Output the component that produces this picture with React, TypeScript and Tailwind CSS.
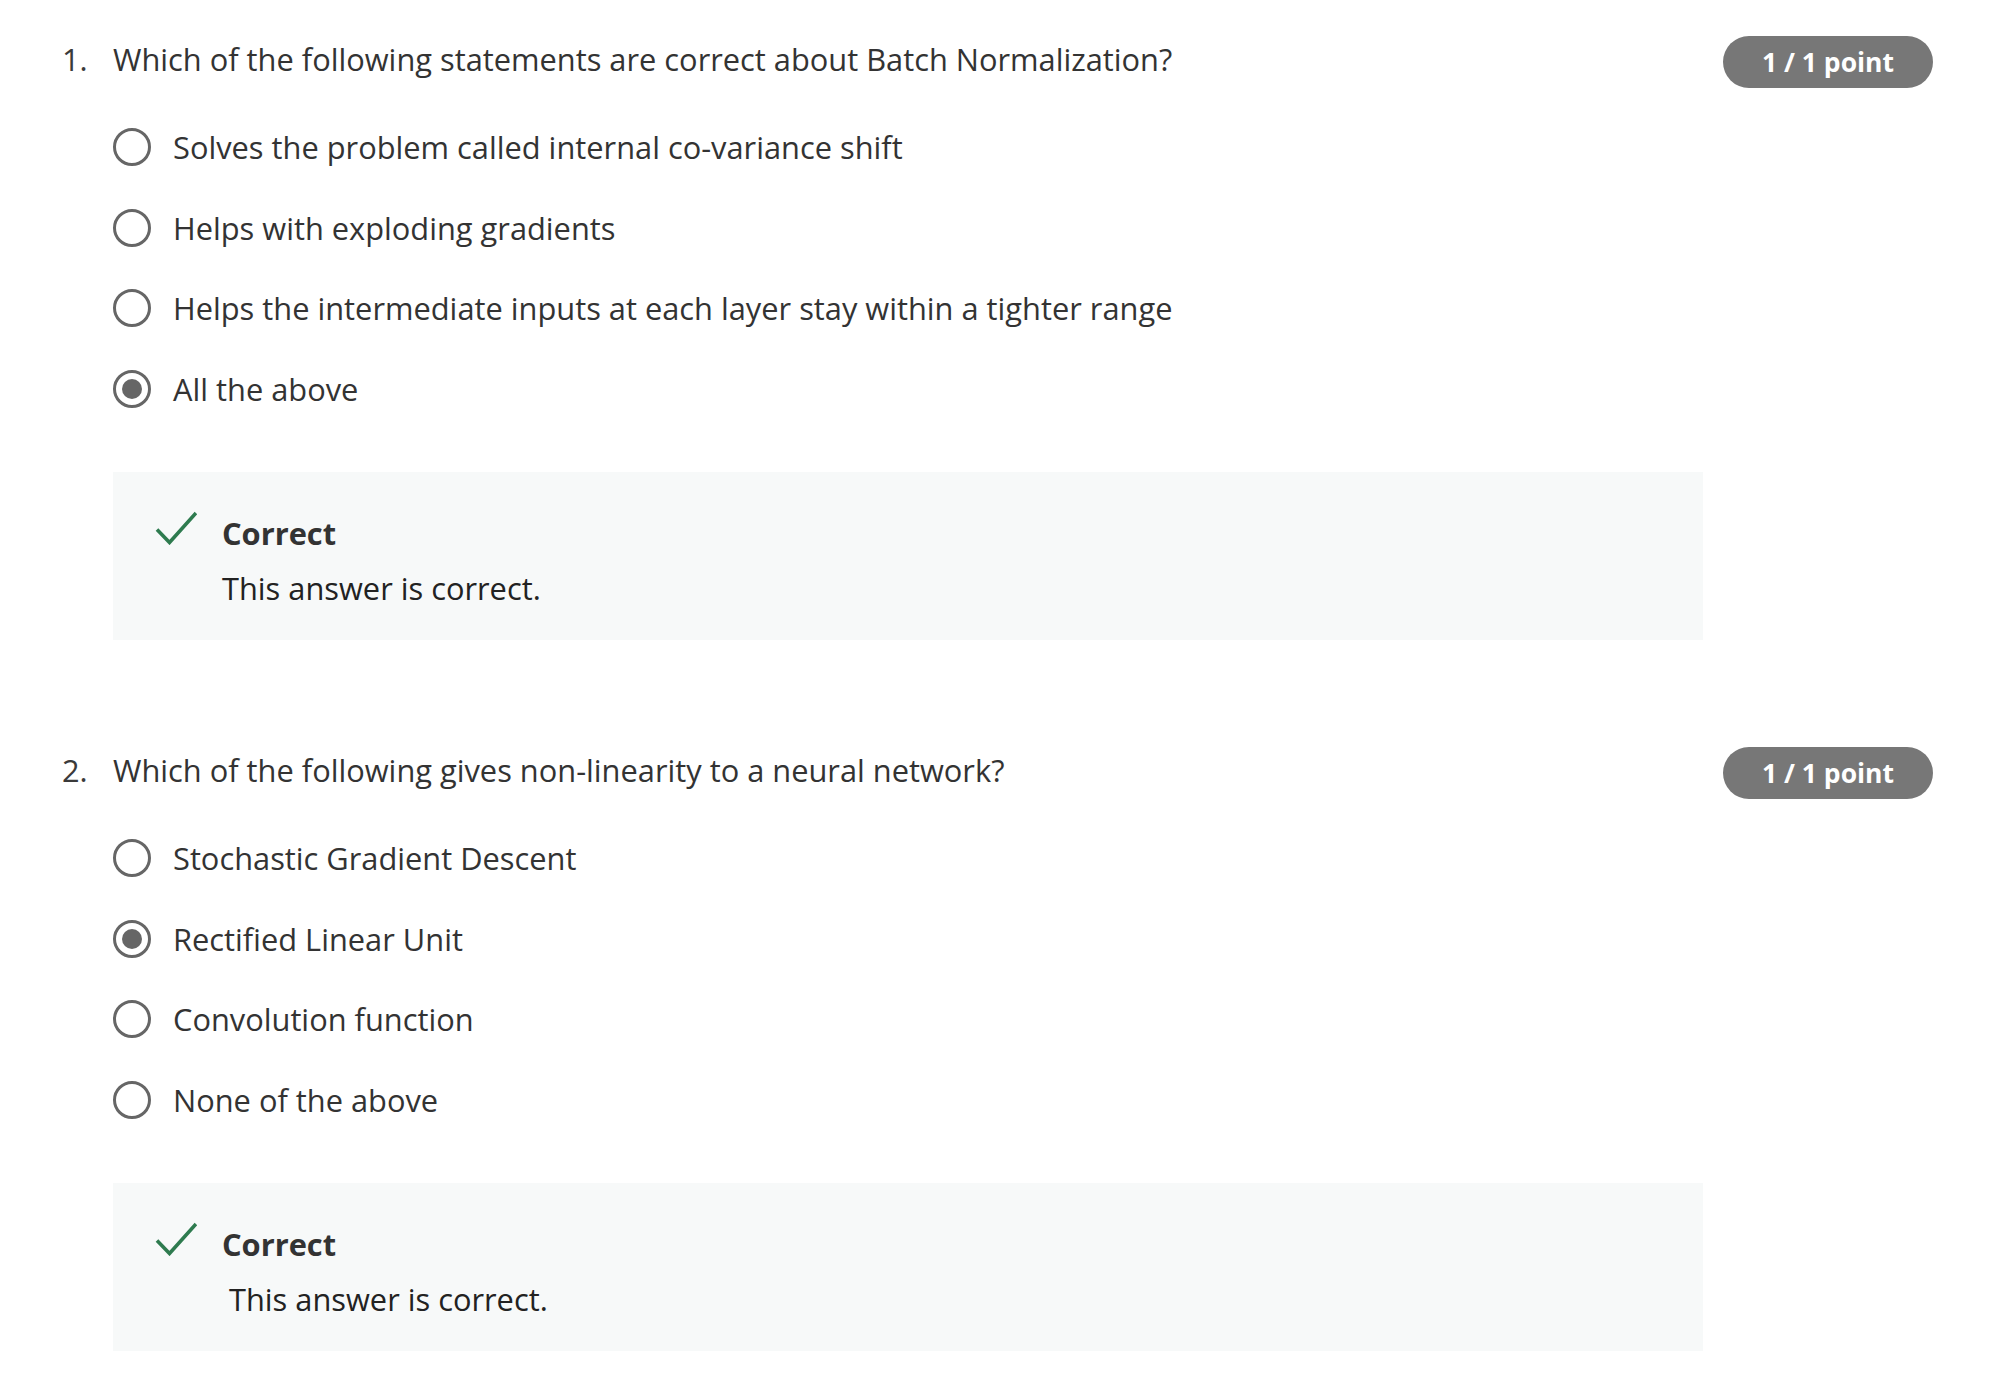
import React from 'react';

interface Question {
  num: number;
  text: string;
  options: string[];
  selected: number;
  note: string;
  noteIndent?: boolean;
}

const questions: Question[] = [
  {
    num: 1,
    text: 'Which of the following statements are correct about Batch Normalization?',
    options: [
      'Solves the problem called internal co-variance shift',
      'Helps with exploding gradients',
      'Helps the intermediate inputs at each layer stay within a tighter range',
      'All the above',
    ],
    selected: 3,
    note: 'This answer is correct.',
  },
  {
    num: 2,
    text: 'Which of the following gives non-linearity to a neural network?',
    options: ['Stochastic Gradient Descent', 'Rectified Linear Unit', 'Convolution function', 'None of the above'],
    selected: 1,
    note: 'This answer is correct.',
    noteIndent: true,
  },
];

function Radio({ checked }: { checked: boolean }) {
  return (
    <span className="flex h-[38px] w-[38px] shrink-0 items-center justify-center rounded-full border-[3px] border-[#666]">
      {checked && <span className="h-[20px] w-[20px] rounded-full bg-[#666]" />}
    </span>
  );
}

function CheckIcon() {
  return (
    <svg width="42" height="34" viewBox="0 0 42 34" className="shrink-0">
      <path d="M2 18.5 L14.5 31.5 L41 2" fill="none" stroke="#2e7b4f" strokeWidth="3.6" />
    </svg>
  );
}

function QuestionBlock({ q, last }: { q: Question; last: boolean }) {
  return (
    <section className={last ? 'flex' : 'mb-[107px] flex'}>
      <div className="w-[51px] shrink-0 pt-[3px] text-[30.8px] leading-[40px] text-[#3a3a3a]">{q.num}.</div>
      <div className="flex-1">
        <div className="flex items-start justify-between">
          <p className="pt-[3px] text-[30.8px] leading-[40px] text-[#333]">{q.text}</p>
          <span className="flex h-[52px] w-[210px] shrink-0 items-center justify-center rounded-full bg-[#777] text-[26.5px] font-bold leading-none text-white">
            1 / 1 point
          </span>
        </div>

        <div className="mt-[19px] flex flex-col">
          {q.options.map((opt, i) => (
            <label key={opt} className="flex h-[80.5px] items-center gap-[22px]">
              <Radio checked={i === q.selected} />
              <span className="text-[30.8px] leading-[40px] text-[#333]">{opt}</span>
            </label>
          ))}
        </div>

        <div className="mt-[43px] h-[168px] w-[1590px] bg-[#f7f9f9] pl-[42px] pt-[39px]">
          <div className="flex items-start gap-[25px]">
            <CheckIcon />
            <div className="pt-[2px]">
              <div className="text-[30.8px] font-bold leading-[40px] text-[#333]">Correct</div>
              <div className={q.noteIndent ? 'mt-[15px] pl-[7px] text-[30.8px] leading-[40px] text-[#222]' : 'mt-[15px] text-[30.8px] leading-[40px] text-[#222]'}>
                {q.note}
              </div>
            </div>
          </div>
        </div>
      </div>
    </section>
  );
}

export default function App() {
  return (
    <div className="min-h-screen bg-white pl-[62px] pr-[61px] pt-[36px] font-['Open_Sans',sans-serif]">
      {questions.map((q, i) => (
        <QuestionBlock key={q.num} q={q} last={i === questions.length - 1} />
      ))}
    </div>
  );
}
